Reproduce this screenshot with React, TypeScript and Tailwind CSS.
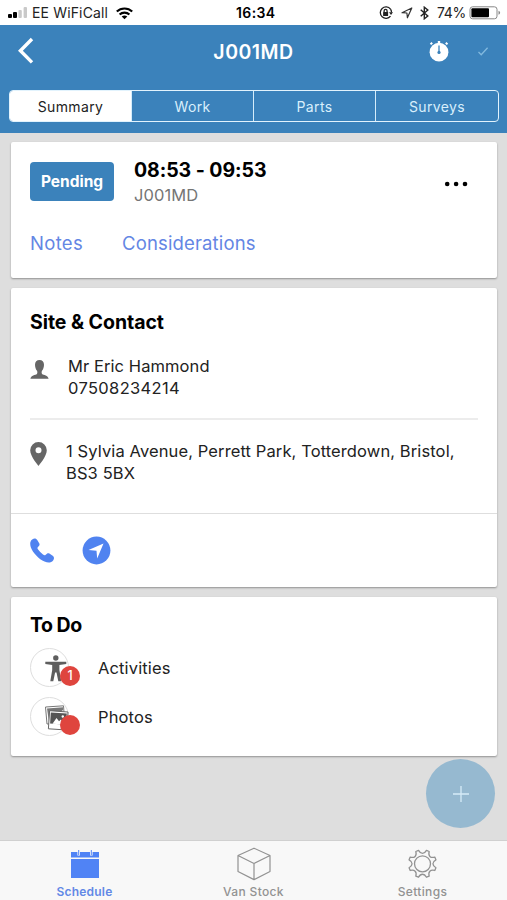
import React from "react";

function gearPath(cx: number, cy: number) {
  const at = (deg: number, r: number) => {
    const a = ((deg - 90) * Math.PI) / 180;
    return `${(cx + r * Math.cos(a)).toFixed(2)} ${(cy + r * Math.sin(a)).toFixed(2)}`;
  };
  let d = `M${at(-16.5, 14)}`;
  for (let k = 0; k < 8; k++) {
    const t = 45 * k;
    if (k > 0) d += ` L${at(t - 16.5, 14)}`;
    d += ` C${at(t - 10.5, 9.6)} ${at(t + 10.5, 9.6)} ${at(t + 16.5, 14)}`;
  }
  return d + "Z";
}

function SignalBars() {
  return (
    <svg width="20" height="12" viewBox="0 0 20 12">
      <rect x="0" y="7" width="4" height="4" rx="1" fill="#000" />
      <rect x="5" y="5" width="4" height="6" rx="1" fill="#000" />
      <rect x="10.4" y="3" width="3.4" height="8" rx="1" fill="#c9c9c9" />
      <rect x="15.6" y="0" width="3.4" height="11" rx="1" fill="#c9c9c9" />
    </svg>
  );
}

function Wifi() {
  return (
    <svg width="17" height="13" viewBox="0 0 17 13" fill="none" stroke="#000" strokeWidth="2.1">
      <path d="M.8 4.6A11 11 0 0 1 16.2 4.6" />
      <path d="M3.6 7.6A7 7 0 0 1 13.4 7.6" />
      <path d="M8.5 12.2 5.7 9.6Q8.5 7.4 11.3 9.6Z" fill="#000" stroke="none" />
    </svg>
  );
}

function StatusBar() {
  return (
    <div className="flex h-[25px] items-center bg-white pt-[1px] text-black">
      <div className="flex w-[236px] items-center pl-[8px]">
        <SignalBars />
        <span className="ml-[4px] mr-[7px] w-[77px] whitespace-nowrap text-[14px] leading-4 tracking-[0.15px] text-[#222]">EE WiFiCall</span>
        <Wifi />
      </div>
      <span className="w-[143px] text-[14px] font-semibold leading-4 tracking-[0.4px]">16:34</span>
      <svg className="shrink-0" width="14" height="14" viewBox="0 0 14 14" fill="none" stroke="#222" strokeWidth="1.3">
        <path d="M11.5 3.1A5.7 5.7 0 1 0 11.5 10.1" />
        <path d="M11.5 3.1A6 6 0 0 1 12.5 6.6" />
        <path d="M10 6.2h4L12 9Z" fill="#222" stroke="none" />
        <rect x="4.1" y="6" width="5" height="4" rx=".5" fill="#222" stroke="none" />
        <path d="M5.1 6.4V4.9a1.5 1.5 0 0 1 3 0v1.5" />
      </svg>
      <svg className="ml-[8px] shrink-0" width="12" height="12" viewBox="0 0 12 12" fill="none" stroke="#333" strokeWidth="1.2" strokeLinejoin="round">
        <path d="M10.8 1 6.4 10.8 5.9 6 1 5.7Z" />
      </svg>
      <svg className="ml-[7px] shrink-0" width="9" height="14" viewBox="0 0 9 14" fill="none" stroke="#222" strokeWidth="1.4">
        <path d="M.7 3.8 7.8 10 4.3 12.8V1.2L7.8 4 .7 10.2" />
      </svg>
      <span className="ml-[8px] w-[32px] whitespace-nowrap text-[14px] leading-4 tracking-[-0.3px] text-[#222]">74%</span>
      <svg className="shrink-0" width="32" height="14" viewBox="0 0 32 14">
        <rect x="1" y=".8" width="27" height="12" rx="2.6" fill="#fff" stroke="#888" strokeWidth="1" />
        <rect x="2.4" y="2.3" width="17.6" height="9" rx="1" fill="#000" />
        <path d="M29.5 4.8q1.6.4 1.6 2t-1.6 2Z" fill="#888" />
      </svg>
    </div>
  );
}

function Header() {
  return (
    <header className="flex h-[108px] flex-col bg-[#3b82bb] text-white">
      <div className="grid h-[65px] grid-cols-[1fr_auto_1fr] items-start pt-[12px]">
        <svg className="ml-[17px]" width="18" height="28" viewBox="0 0 18 28" fill="none" stroke="#fff" strokeWidth="3.4">
          <path d="M15 2 3.400 13.700 15 25.400" />
        </svg>
        <h1 className="pt-px text-[19.5px] font-semibold leading-[29px] tracking-[0.5px]">J001MD</h1>
        <div className="flex justify-end">
          <svg className="mr-[27px] mt-[3px]" width="22" height="22" viewBox="0 0 22 22">
            <circle cx="11" cy="12.2" r="9.4" fill="#fff" />
            <rect x="9.8" y="1" width="2.4" height="3" fill="#fff" />
            <path d="M2.500 4.400 4.200 2.700M19.500 4.400 17.800 2.700" stroke="#fff" strokeWidth="2" />
            <path d="M11 5.600V12" stroke="#3b82bb" strokeWidth="1.300" />
            <circle cx="11" cy="12.400" r="1.600" fill="#3b82bb" />
          </svg>
          <svg className="mr-[18px] mt-[9px]" width="12" height="11" viewBox="0 0 12 11" fill="none" stroke="#82b9de" strokeWidth="1.300">
            <path d="M1.500 6 4.200 8.700 10.600 1.800" />
          </svg>
        </div>
      </div>
      <nav className="ml-[9px] mr-[8px] grid h-[32px] grid-cols-4 divide-x divide-[#d5edfb] overflow-hidden rounded-[4px] border border-[#e2f3fd] text-center text-[14px] leading-[32px] tracking-[0.350px] text-[#d9effc]">
        <span className="bg-white text-[#222]">Summary</span>
        <span>Work</span>
        <span>Parts</span>
        <span>Surveys</span>
      </nav>
    </header>
  );
}

function Card({ className, children }: { className: string; children: React.ReactNode }) {
  return (
    <section className={`rounded-[2px] bg-white shadow-[0_1px_2px_rgba(0,0,0,0.35)] ${className}`}>{children}</section>
  );
}

function JobCard() {
  return (
    <Card className="h-[136px] pl-[19px] pr-[29px] pt-[16px]">
      <div className="flex">
        <span className="mt-[4px] h-[39px] w-[84px] rounded-[4px] bg-[#3b82bb] text-center text-[15.500px] font-bold leading-[39px] text-white">Pending</span>
        <div className="ml-[20px] flex-1">
          <p className="text-[19.500px] font-bold leading-[25px] tracking-[-0.050px] text-black">08:53 - 09:53</p>
          <p className="text-[16.500px] leading-[25px] tracking-[0.100px] text-[#757575]">J001MD</p>
        </div>
        <svg className="mt-[22px]" width="24" height="8" viewBox="0 0 24 8">
          <circle cx="3.200" cy="4" r="2.300" />
          <circle cx="12.100" cy="4" r="2.300" />
          <circle cx="21" cy="4" r="2.300" />
        </svg>
      </div>
      <div className="mt-[23px] flex text-[18.500px] leading-[24px] tracking-[0.150px] text-[#6486e4]">
        <span className="w-[92px] tracking-[0.300px]">Notes</span>
        <span>Considerations</span>
      </div>
    </Card>
  );
}

function ContactCard() {
  return (
    <Card className="mt-[10px] flex h-[299px] flex-col pt-[20px]">
      <h2 className="px-[19px] pt-px text-[19.500px] font-bold leading-[27px] tracking-[-0.050px] text-black">Site &amp; Contact</h2>
      <div className="mx-[19px] flex h-[84px] border-b-2 border-[#ececec] pt-[19px]">
        <svg className="mt-[5px]" width="19" height="19" viewBox="0 0 19 19" fill="#666">
          <path d="M9.500 0C6.700 0 5 1.900 5 4.700c0 2.600.9 4.700 2 6.100.5.800.5 2.500-.1 3.100C5.500 15 .8 15.200.4 18.700H18.600C18.200 15.200 13.500 15 12.100 13.900c-.6-.6-.6-2.300-.1-3.100 1.100-1.400 2-3.500 2-6.100C14 1.900 12.300 0 9.500 0Z" />
        </svg>
        <p className="ml-[19px] text-[16.500px] leading-[22px] tracking-[0.080px] text-[#222]">
          Mr Eric Hammond
          <br />
          <span className="tracking-[0.350px]">07508234214</span>
        </p>
      </div>
      <div className="flex h-[94px] border-b border-[#dedede] pl-[19px] pt-[20px]">
        <svg className="mt-[2px]" width="17" height="24" viewBox="0 0 17 24" fill="#666" fillRule="evenodd">
          <path d="M8.500 0A8.300 8.300 0 0 0 .2 8.300C.2 14.400 8.500 24 8.500 24S16.800 14.400 16.800 8.300A8.300 8.300 0 0 0 8.500 0Zm0 5.300a3 3 0 1 1 0 6 3 3 0 0 1 0-6Z" />
        </svg>
        <p className="ml-[19px] whitespace-nowrap text-[16.500px] leading-[22px] tracking-[0.110px] text-[#222]">
          1 Sylvia Avenue, Perrett Park, Totterdown, Bristol,
          <br />
          BS3 5BX
        </p>
      </div>
      <div className="flex flex-1 items-center pl-[19px]">
        <svg width="25" height="25" viewBox="0 0 25 25" fill="#5083f0">
          <path d="M2.200 1.500C4.300.1 6.100.3 7.400 2.300L9.200 5.200c.8 1.400.2 2.400-1.200 3.700-.8.800-.7 1.500.1 2.700a24 24 0 0 0 4.900 5c1.200.9 1.900 1 2.700.2 1.300-1.400 2.300-2 3.700-1.200l2.900 1.900c2 1.300 2.200 3 .8 5-2 2.500-5.100 2.600-8.600 1.100C9.100 21.400 2.600 14.700.8 9.300-.2 6.100-.1 3.200 2.200 1.500Z" />
        </svg>
        <svg className="ml-[27px]" width="29" height="29" viewBox="0 0 29 29">
          <circle cx="14.500" cy="14.500" r="13.900" fill="#5083f0" />
          <path d="M21.500 7.500 15.200 22.500 14.500 14.700 6.500 14Z" fill="#fff" />
        </svg>
      </div>
    </Card>
  );
}

function ActivityIcon() {
  return (
    <svg className="ml-[14px] mt-[2px]" width="22" height="27" viewBox="0 0 22 27" fill="#5e5e5e">
      <circle cx="10.800" cy="3" r="2.700" />
      <path d="M.3 6.700H21.300V9L14.400 10V15L16.300 26.300H13.300L11.500 17.500H10.100L8.300 26.300H5.300L7.200 15V10L.3 9Z" />
    </svg>
  );
}

function PhotosIcon() {
  return (
    <svg className="ml-[13px] mt-[3px]" width="26" height="27" viewBox="0 0 26 27">
      <path d="M1.500 2 19.500.8 20.800 18 3 19Z" fill="#fff" stroke="#777" strokeWidth="1" />
      <path d="M3 3.400 19 2.200 19 5 5 17Z" fill="#777" />
      <path d="M5.600 5.700 24 7 22.800 25 4.400 23.800Z" fill="#fff" stroke="#666" strokeWidth="1" />
      <path d="M6.800 7.500 22.800 8.600 22 19.700 6.100 18.600Z" fill="#555" />
      <path d="M8.500 18.800 12.500 13 15 16.200 17 14.500 20 19.500Z" fill="#fff" />
      <circle cx="18.800" cy="11.500" r="1.200" fill="#fff" />
    </svg>
  );
}

function TodoRow({ icon, label, badge }: { icon: React.ReactNode; label: string; badge: string }) {
  return (
    <div className="flex h-[49px] items-start">
      <div className="relative flex h-[39px] w-[39px] items-center rounded-full border border-[#dedede]">
        <div className="shrink-0">{icon}</div>
        <span className="absolute left-[29px] top-[17px] h-[20px] w-[20px] rounded-full bg-[#df453e] text-center text-[12.500px] font-medium leading-[20px] text-white">{badge}</span>
      </div>
      <span className="ml-[29px] text-[16.500px] leading-[40px] tracking-[0.130px] text-[#222]">{label}</span>
    </div>
  );
}

function TodoCard() {
  return (
    <Card className="mt-[10px] h-[159px] pl-[19px] pt-[14px]">
      <h2 className="mb-[9px] pt-px text-[19.500px] font-bold leading-[27px] tracking-[-0.500px] text-black">To Do</h2>
      <TodoRow icon={<ActivityIcon />} label="Activities" badge="1" />
      <TodoRow icon={<PhotosIcon />} label="Photos" badge="" />
    </Card>
  );
}

function TabBar() {
  return (
    <footer className="grid h-[60px] grid-cols-3 border-t border-[#d0d0d0] bg-[#f8f8f8] text-[12px] font-medium tracking-[0.350px] text-[#929292]">
      <div className="flex flex-col items-center pt-[8px] font-semibold text-[#6288e6]">
        <svg width="30" height="30" viewBox="0 0 30 30">
          <path d="M1 3H29V8.500H1ZM1 10H29V29H1Z" fill="#5083f5" />
          <path d="M8.700 1V6.500M21.300 1V6.500" stroke="#f8f8f8" strokeWidth="2.600" />
          <path d="M8.700 1V6M21.300 1V6" stroke="#5083f5" strokeWidth="1" />
        </svg>
        <span className="mt-[5px] leading-[16px] tracking-[0.200px]">Schedule</span>
      </div>
      <div className="flex flex-col items-center pt-[6px]">
        <svg width="34" height="34" viewBox="0 0 34 34" fill="none" stroke="#929292" strokeWidth="1.200" strokeLinejoin="round">
          <path d="M17 1.200 33 8.500V24.500L17 32.600 1 24.500V8.500ZM1 8.500 17 16.500 33 8.500M17 16.500V32.600" />
        </svg>
        <span className="mt-[3px] leading-[16px]">Van Stock</span>
      </div>
      <div className="flex flex-col items-center pt-[7px]">
        <svg width="32" height="32" viewBox="0 0 32 32" fill="none" stroke="#929292" strokeWidth="1.300" strokeLinejoin="round">
          <path d={gearPath(15.5, 15.8)} />
          <circle cx="15.500" cy="15.800" r="8" />
        </svg>
        <span className="mt-[4px] leading-[16px]">Settings</span>
      </div>
    </footer>
  );
}

export default function App() {
  return (
    <div className="relative flex h-[900px] w-[507px] flex-col overflow-hidden bg-[#dedede] font-['Inter',sans-serif]">
      <StatusBar />
      <Header />
      <main className="flex-1 pl-[11px] pr-[10px] pt-[9px]">
        <JobCard />
        <ContactCard />
        <TodoCard />
      </main>
      <TabBar />
      <button className="absolute bottom-[72px] right-[12px] flex h-[69px] w-[69px] items-center justify-center rounded-full bg-[#96b9d0]">
        <svg width="18" height="18" viewBox="0 0 18 18" stroke="#d6ebf7" strokeWidth="1.300">
          <path d="M9 1V17M1 9H17" />
        </svg>
      </button>
    </div>
  );
}
